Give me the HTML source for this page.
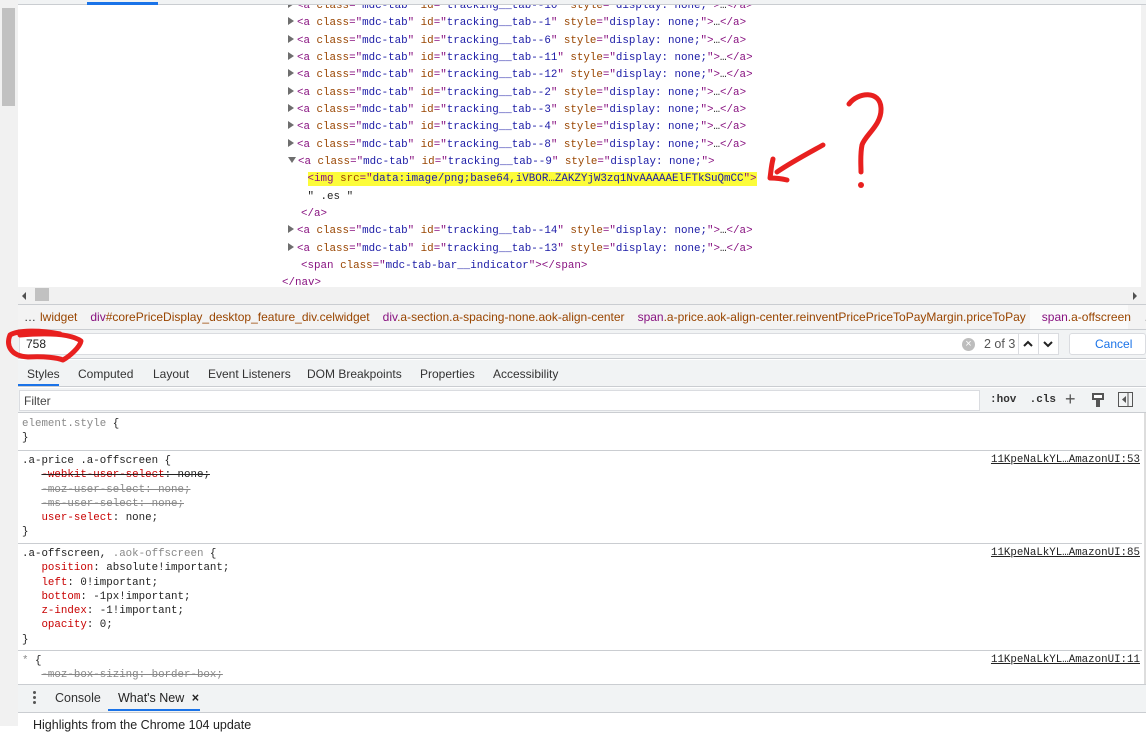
<!DOCTYPE html>
<html><head><meta charset="utf-8"><style>
*{margin:0;padding:0;box-sizing:border-box}
body{width:1146px;height:726px;overflow:hidden;background:#fff;position:relative;font-family:"Liberation Sans",sans-serif;font-size:12px;color:#333}
.a{position:absolute}
.m{font-family:"Liberation Mono",monospace;white-space:pre}
.el{font-size:10.85px;line-height:17.33px;color:#881280}
.t{color:#881280}.n{color:#994500}.v{color:#1a1aa6}.k{color:#222}
.tri{display:inline-block;width:0;height:0;border-top:4px solid transparent;border-bottom:4px solid transparent;border-left:6px solid #6e6e6e;margin-right:3px;vertical-align:0}
.trd{display:inline-block;width:0;height:0;border-left:4px solid transparent;border-right:4px solid transparent;border-top:6px solid #6e6e6e;margin-right:2px;vertical-align:1px}
.st{font-size:10.8px;line-height:14.3px;color:#222}
.p{color:#c80000}.s{text-decoration:line-through;color:#888}
.hr{position:absolute;left:18px;right:4px;height:1px;background:#cacdd1}
.lnk{font-family:"Liberation Mono",monospace;font-size:10.8px;text-decoration:underline;color:#222;position:absolute;right:6px}
.bc span.i{margin-right:13px}
</style></head><body>
<div class="a" style="left:0;top:0;width:18px;height:726px;background:#f1f1f1"></div>
<div class="a" style="left:2px;top:8px;width:13px;height:98px;background:#c1c1c1"></div>
<div class="a" style="left:18px;top:0;width:1128px;height:5px;background:#f1f3f4;border-bottom:1px solid #cacdd1"></div>
<div class="a" style="left:87px;top:2px;width:71px;height:3px;background:#1a73e8"></div>
<div class="a" style="left:1141px;top:5px;width:5px;height:282px;background:#f1f1f1"></div>

<div class="a" style="left:18px;top:5px;width:1123px;height:282px;overflow:hidden">
<div class="a m el" style="left:270px;top:-7px"><span class="tri"></span><span class="t">&lt;a </span><span class="n">class</span><span class="t">="</span><span class="v">mdc-tab</span><span class="t">" </span><span class="n">id</span><span class="t">="</span><span class="v">tracking__tab--10</span><span class="t">" </span><span class="n">style</span><span class="t">="</span><span class="v">display: none;</span><span class="t">"&gt;</span><span class="k">…</span><span class="t">&lt;/a&gt;</span>
<span class="tri"></span><span class="t">&lt;a </span><span class="n">class</span><span class="t">="</span><span class="v">mdc-tab</span><span class="t">" </span><span class="n">id</span><span class="t">="</span><span class="v">tracking__tab--1</span><span class="t">" </span><span class="n">style</span><span class="t">="</span><span class="v">display: none;</span><span class="t">"&gt;</span><span class="k">…</span><span class="t">&lt;/a&gt;</span>
<span class="tri"></span><span class="t">&lt;a </span><span class="n">class</span><span class="t">="</span><span class="v">mdc-tab</span><span class="t">" </span><span class="n">id</span><span class="t">="</span><span class="v">tracking__tab--6</span><span class="t">" </span><span class="n">style</span><span class="t">="</span><span class="v">display: none;</span><span class="t">"&gt;</span><span class="k">…</span><span class="t">&lt;/a&gt;</span>
<span class="tri"></span><span class="t">&lt;a </span><span class="n">class</span><span class="t">="</span><span class="v">mdc-tab</span><span class="t">" </span><span class="n">id</span><span class="t">="</span><span class="v">tracking__tab--11</span><span class="t">" </span><span class="n">style</span><span class="t">="</span><span class="v">display: none;</span><span class="t">"&gt;</span><span class="k">…</span><span class="t">&lt;/a&gt;</span>
<span class="tri"></span><span class="t">&lt;a </span><span class="n">class</span><span class="t">="</span><span class="v">mdc-tab</span><span class="t">" </span><span class="n">id</span><span class="t">="</span><span class="v">tracking__tab--12</span><span class="t">" </span><span class="n">style</span><span class="t">="</span><span class="v">display: none;</span><span class="t">"&gt;</span><span class="k">…</span><span class="t">&lt;/a&gt;</span>
<span class="tri"></span><span class="t">&lt;a </span><span class="n">class</span><span class="t">="</span><span class="v">mdc-tab</span><span class="t">" </span><span class="n">id</span><span class="t">="</span><span class="v">tracking__tab--2</span><span class="t">" </span><span class="n">style</span><span class="t">="</span><span class="v">display: none;</span><span class="t">"&gt;</span><span class="k">…</span><span class="t">&lt;/a&gt;</span>
<span class="tri"></span><span class="t">&lt;a </span><span class="n">class</span><span class="t">="</span><span class="v">mdc-tab</span><span class="t">" </span><span class="n">id</span><span class="t">="</span><span class="v">tracking__tab--3</span><span class="t">" </span><span class="n">style</span><span class="t">="</span><span class="v">display: none;</span><span class="t">"&gt;</span><span class="k">…</span><span class="t">&lt;/a&gt;</span>
<span class="tri"></span><span class="t">&lt;a </span><span class="n">class</span><span class="t">="</span><span class="v">mdc-tab</span><span class="t">" </span><span class="n">id</span><span class="t">="</span><span class="v">tracking__tab--4</span><span class="t">" </span><span class="n">style</span><span class="t">="</span><span class="v">display: none;</span><span class="t">"&gt;</span><span class="k">…</span><span class="t">&lt;/a&gt;</span>
<span class="tri"></span><span class="t">&lt;a </span><span class="n">class</span><span class="t">="</span><span class="v">mdc-tab</span><span class="t">" </span><span class="n">id</span><span class="t">="</span><span class="v">tracking__tab--8</span><span class="t">" </span><span class="n">style</span><span class="t">="</span><span class="v">display: none;</span><span class="t">"&gt;</span><span class="k">…</span><span class="t">&lt;/a&gt;</span>
<span class="trd"></span><span class="t">&lt;a </span><span class="n">class</span><span class="t">="</span><span class="v">mdc-tab</span><span class="t">" </span><span class="n">id</span><span class="t">="</span><span class="v">tracking__tab--9</span><span class="t">" </span><span class="n">style</span><span class="t">="</span><span class="v">display: none;</span><span class="t">"&gt;</span>
   <span style="background:#fcfc3a;padding:1px 0"><span class="t">&lt;img </span><span class="n">src</span><span class="t">="</span><span class="v">data:image/png;base64,iVBOR…ZAKZYjW3zq1NvAAAAAElFTkSuQmCC</span><span class="t">"&gt;</span></span>
   <span class="k">" .es "</span>
  <span class="t">&lt;/a&gt;</span>
<span class="tri"></span><span class="t">&lt;a </span><span class="n">class</span><span class="t">="</span><span class="v">mdc-tab</span><span class="t">" </span><span class="n">id</span><span class="t">="</span><span class="v">tracking__tab--14</span><span class="t">" </span><span class="n">style</span><span class="t">="</span><span class="v">display: none;</span><span class="t">"&gt;</span><span class="k">…</span><span class="t">&lt;/a&gt;</span>
<span class="tri"></span><span class="t">&lt;a </span><span class="n">class</span><span class="t">="</span><span class="v">mdc-tab</span><span class="t">" </span><span class="n">id</span><span class="t">="</span><span class="v">tracking__tab--13</span><span class="t">" </span><span class="n">style</span><span class="t">="</span><span class="v">display: none;</span><span class="t">"&gt;</span><span class="k">…</span><span class="t">&lt;/a&gt;</span>
  <span class="t">&lt;span </span><span class="n">class</span><span class="t">="</span><span class="v">mdc-tab-bar__indicator</span><span class="t">"&gt;&lt;/span&gt;</span>
<span class="t" style="margin-left:-6px">&lt;/nav&gt;</span></div>
</div>

<!-- h scrollbar -->
<div class="a" style="left:18px;top:287px;width:1128px;height:17px;background:#f1f1f1"></div>
<div class="a" style="left:22px;top:292px;width:0;height:0;border-top:4px solid transparent;border-bottom:4px solid transparent;border-right:4px solid #505050"></div>
<div class="a" style="left:35px;top:288px;width:14px;height:13px;background:#c1c1c1"></div>
<div class="a" style="left:1133px;top:292px;width:0;height:0;border-top:4px solid transparent;border-bottom:4px solid transparent;border-left:4px solid #505050"></div>

<!-- breadcrumbs -->
<div class="a" style="left:18px;top:304px;width:1128px;height:26px;background:#f3f3f3;border-top:1px solid #cacdd1;border-bottom:1px solid #cacdd1"></div>
<div class="a" style="left:1030px;top:305px;width:98px;height:24px;background:#fafafa"></div>
<div class="a bc" style="left:24px;top:310px;font-size:12px;white-space:nowrap;color:#994500">
<span class="i" style="color:#333;margin-right:4px">…</span><span class="i">lwidget</span><span class="i"><span style="color:#881280">div</span>#corePriceDisplay_desktop_feature_div.celwidget</span><span class="i"><span style="color:#881280">div</span>.a-section.a-spacing-none.aok-align-center</span><span class="i" style="margin-right:16px"><span style="color:#881280">span</span>.a-price.aok-align-center.reinventPricePriceToPayMargin.priceToPay</span><span class="i"><span style="color:#881280">span</span>.a-offscreen</span><span style="color:#888">…</span></div>

<!-- search bar -->
<div class="a" style="left:18px;top:330px;width:1128px;height:29px;background:#f1f3f4;border-bottom:1px solid #cacdd1"></div>
<div class="a" style="left:19px;top:333px;width:1040px;height:22px;background:#fff;border:1px solid #dadce0"></div>
<div class="a" style="left:26px;top:337px;font-size:12px;color:#222">758</div>
<div class="a" style="left:962px;top:338px;width:13px;height:13px;border-radius:50%;background:#bdbdbd;color:#fff;font-size:11px;line-height:13px;text-align:center">×</div>
<div class="a" style="left:984px;top:337px;font-size:12.5px;color:#555">2 of 3</div>
<div class="a" style="left:1018px;top:333px;width:1px;height:22px;background:#dadce0"></div>
<div class="a" style="left:1038px;top:333px;width:1px;height:22px;background:#dadce0"></div>
<svg class="a" style="left:1022px;top:338px" width="12" height="12"><path d="M2 8 L6 4 L10 8" stroke="#222" stroke-width="2" fill="none"/></svg>
<svg class="a" style="left:1042px;top:338px" width="12" height="12"><path d="M2 4 L6 8 L10 4" stroke="#222" stroke-width="2" fill="none"/></svg>
<div class="a" style="left:1069px;top:333px;width:77px;height:22px;background:#fff;border:1px solid #dadce0;border-radius:3px;color:#1a73e8;font-size:12px;line-height:20px;padding-left:25px">Cancel</div>

<!-- tabs -->
<div class="a" style="left:18px;top:360px;width:1128px;height:27px;background:#f1f3f4;border-bottom:1px solid #cacdd1"></div>
<div class="a" style="left:27px;top:367px;font-size:12px;color:#333;white-space:nowrap">
<span class="a" style="left:0">Styles</span><span class="a" style="left:51px">Computed</span><span class="a" style="left:126px">Layout</span><span class="a" style="left:181px">Event Listeners</span><span class="a" style="left:280px">DOM Breakpoints</span><span class="a" style="left:393px">Properties</span><span class="a" style="left:466px">Accessibility</span></div>
<div class="a" style="left:18px;top:384px;width:41px;height:2px;background:#1a73e8"></div>

<!-- filter -->
<div class="a" style="left:18px;top:388px;width:1128px;height:25px;background:#f1f3f4;border-bottom:1px solid #cacdd1"></div>
<div class="a" style="left:19px;top:390px;width:961px;height:21px;background:#fff;border:1px solid #dadce0;padding:3px 4px;font-size:12px;color:#444">Filter</div>
<div class="a m" style="left:990px;top:394px;font-size:11px;color:#333;font-weight:bold">:hov  .cls</div>
<div class="a" style="left:1065px;top:389px;font-size:18px;color:#555">+</div>
<svg class="a" style="left:1091px;top:392px" width="15" height="16"><rect x="1" y="1" width="12" height="7" fill="#555"/><rect x="3" y="3" width="8" height="3" fill="#fff"/><rect x="5" y="8" width="4" height="7" fill="#555"/></svg>
<svg class="a" style="left:1118px;top:392px" width="16" height="16"><rect x="0.5" y="0.5" width="14" height="14" fill="none" stroke="#555"/><line x1="10" y1="1" x2="10" y2="14" stroke="#555"/><path d="M8 4 L4 7.5 L8 11Z" fill="#555"/></svg>

<!-- styles -->
<div class="a m st" style="left:22px;top:417px"><span style="color:#888">element.style</span> {
}</div>
<div class="hr" style="top:450px"></div>
<div class="a m st" style="left:22px;top:454px">.a-price .a-offscreen {
   <span style="text-decoration:line-through;color:#222"><span class="p">-webkit-user-select</span>: none;</span>
   <span class="s">-moz-user-select: none;</span>
   <span class="s">-ms-user-select: none;</span>
   <span class="p">user-select</span>: none;
}</div>
<div class="lnk" style="top:454px">11KpeNaLkYL…AmazonUI:53</div>
<div class="hr" style="top:543px"></div>
<div class="a m st" style="left:22px;top:547px">.a-offscreen, <span style="color:#888">.aok-offscreen</span> {
   <span class="p">position</span>: absolute!important;
   <span class="p">left</span>: 0!important;
   <span class="p">bottom</span>: -1px!important;
   <span class="p">z-index</span>: -1!important;
   <span class="p">opacity</span>: 0;
}</div>
<div class="lnk" style="top:547px">11KpeNaLkYL…AmazonUI:85</div>
<div class="hr" style="top:650px"></div>
<div class="a m st" style="left:22px;top:654px"><span style="color:#888">*</span> {
   <span class="s">-moz-box-sizing: border-box;</span></div>
<div class="lnk" style="top:654px">11KpeNaLkYL…AmazonUI:11</div>
<div class="a" style="left:1144px;top:413px;width:2px;height:272px;background:#ddd"></div>

<!-- drawer -->
<div class="a" style="left:18px;top:684px;width:1128px;height:29px;background:#f1f3f4;border-top:1px solid #cacdd1;border-bottom:1px solid #cacdd1"></div>
<div class="a" style="left:33px;top:691px;width:3px;height:3px;background:#555;border-radius:50%;box-shadow:0 5px 0 #555,0 10px 0 #555"></div>
<div class="a" style="left:55px;top:691px;font-size:12.5px;color:#333">Console</div>
<div class="a" style="left:118px;top:691px;font-size:12.5px;color:#222">What's New <b style="margin-left:4px">×</b></div>
<div class="a" style="left:108px;top:709px;width:92px;height:2px;background:#1a73e8"></div>
<div class="a" style="left:33px;top:718px;font-size:12.5px;color:#222">Highlights from the Chrome 104 update</div>

<!-- red annotations -->
<svg class="a" style="left:0;top:0" width="1146" height="726">
<g stroke="#e8201f" stroke-width="5" fill="none" stroke-linecap="round" stroke-linejoin="round">
<path d="M60 334 C40 330 18 330 10 335 C6 345 10 356 28 357 C45 356 58 358 63 360 C70 356 80 347 81 341 C70 333 45 333 20 335"/>
<path d="M823 145 C805 155 790 163 777 172"/>
<path d="M773 159 C771 167 771 172 770 178 C777 178 783 179 787 180"/>
<path d="M849 104 C858 92 880 90 881 108 C882 125 865 135 862 145 C860 155 861 165 861 172"/>
</g>
<circle cx="861" cy="185" r="3" fill="#e8201f"/>
</svg>
</body></html>
